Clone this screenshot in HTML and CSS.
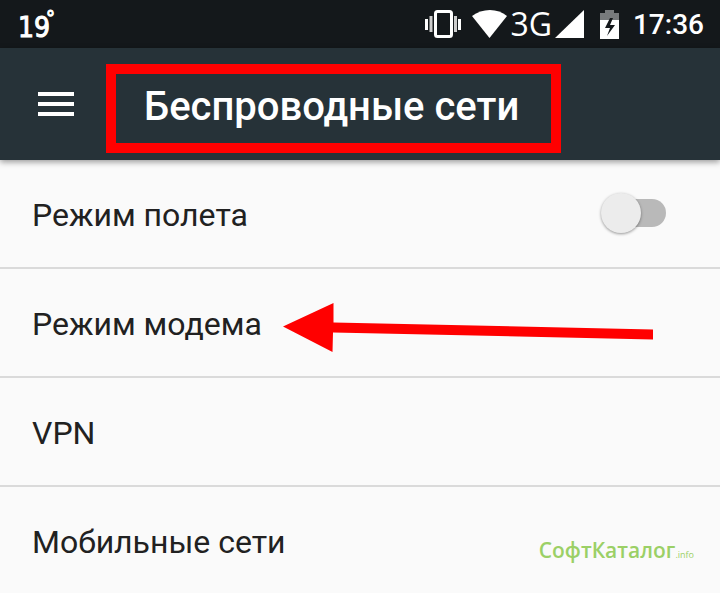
FILE: index.html
```
<!DOCTYPE html>
<html lang="ru">
    <head>
        <meta charset="utf-8">
        <meta name="viewport" content="width=device-width, initial-scale=1">
        <title>Беспроводные сети</title>
        <link rel="stylesheet" href="styles.css">
    </head>
    <body>
        <div class="statusbar">
            <span class="temperature">19<sup>°</sup></span>

            <div class="status-icons">
                <svg class="icon-vibrate" width="36" height="28" viewBox="0 0 36 28">
                    <rect x="10.500" y="1.500" width="16" height="25" rx="2" fill="none" stroke="#fff" stroke-width="3"/>
                    <path d="M0 9h3v11H0zM33 9h3v11h-3z" fill="#fff"/>
                    <path d="M4.500 6h3v16h-3zM29 6h3v16h-3z" fill="#ccc"/>
                </svg>
                <svg class="icon-wifi" width="36" height="28" viewBox="0 0 36 28">
                    <path d="M0 6C10-2 26-2 35 6L17.500 28z" fill="#fff"/>
                </svg>
                <span class="network">3G</span>
                <svg class="icon-signal" width="29" height="28" viewBox="0 0 29 28">
                    <path d="M0 28L29 0v28z" fill="#fff"/>
                </svg>
                <svg class="icon-battery" width="19" height="29" viewBox="0 0 19 29">
                    <path d="M0 3h5V0h9v3h5v7H0z" fill="#777a7c"/>
                    <path d="M0 10h19v19H0z" fill="#fff"/>
                    <path d="M10 8L5 18h5L7 26l8-11h-5l3-7z" fill="#14181b"/>
                </svg>
                <span class="clock">17:36</span>
            </div>
        </div>

        <header class="toolbar">
            <button class="menu-button" type="button" aria-label="Меню">
                <svg width="36" height="24" viewBox="0 0 36 24">
                    <path d="M0 0h36v4H0zM0 10h36v4H0zM0 20h36v4H0z" fill="#fff"/>
                </svg>
            </button>
            <h1>Беспроводные сети</h1>
        </header>

        <main class="settings">
            <div class="row">
                <label for="airplaneMode">Режим полета</label>
                <input id="airplaneMode" class="switch" type="checkbox">
            </div>
            <div class="row">
                <a href="#tethering">Режим модема</a>
                <svg class="arrow" width="370" height="50" viewBox="0 0 370 50">
                    <path d="M0 23.500L50.500 0V19.500L370 26.500V36.500L50 29.500L49.500 49z" fill="#f00"/>
                </svg>
            </div>
            <div class="row">
                <a href="#vpn">VPN</a>
            </div>
            <div class="row">
                <a href="#mobile">Мобильные сети</a>
                <div class="watermark">СофтКаталог<small>.info</small></div>
            </div>
        </main>
    </body>
</html>
```

FILE: styles.css
```
* {
    box-sizing: border-box;
}

body {
    margin: 0;
    background-color: #fafafa;
    color: #212121;
    font-family: Roboto, sans-serif;
}

svg {
    display: block;
    flex-shrink: 0;
}

.statusbar {
    display: flex;
    justify-content: space-between;
    align-items: center;
    height: 48px;
    padding: 0 16px 0 18px;
    background-color: #14181b;
    color: white;
}

.temperature {
    display: flex;
    align-items: center;
    font-family: "DejaVu Sans Condensed", "DejaVu Sans", sans-serif;
    font-size: 28px;
    line-height: 40px;
    padding-top: 8px;
    -webkit-text-stroke: 1px white;
}

.temperature sup {
    align-self: flex-start;
    font-size: 20px;
    line-height: 20px;
    margin-left: -4px;
}

.status-icons {
    display: flex;
    align-items: center;
}

.icon-wifi {
    margin-left: 11px;
}

.network {
    margin: 0 3px 0 2px;
    font-family: "Open Sans", sans-serif;
    font-size: 32px;
    line-height: 48px;
}

.icon-battery {
    margin: 0 14px 0 16px;
}

.clock {
    font-size: 28px;
    font-weight: 500;
    line-height: 48px;
    padding-top: 2px;
}

.toolbar {
    display: flex;
    align-items: flex-start;
    padding: 16px 32px 7px 38px;
    background-color: #263238;
    box-shadow: 0 2px 6px rgba(0, 0, 0, 0.4);
}

.menu-button {
    margin: 28px 32px 0 0;
    padding: 0;
    border: none;
    background: none;
    cursor: pointer;
}

h1 {
    margin: 0;
    padding: 9px 32px 12px 28px;
    border: 10px solid #f00;
    color: white;
    font-size: 40px;
    font-weight: 500;
    line-height: 48px;
    white-space: nowrap;
}

.row {
    display: flex;
    align-items: center;
    height: 109px;
    padding: 0 54px 0 32px;
    border-bottom: 2px solid #dadada;
    font-size: 32px;
    line-height: 40px;
}

.row:last-child {
    height: 107px;
    border-bottom: none;
}

.row label,
.row a {
    padding-top: 2px;
    color: inherit;
    text-decoration: none;
}

.switch {
    appearance: none;
    position: relative;
    width: 65px;
    height: 40px;
    margin: 0 0 2px auto;
    cursor: pointer;
}

.switch::before {
    content: "";
    position: absolute;
    top: 6px;
    left: 8px;
    right: 0;
    height: 28px;
    border-radius: 14px;
    background-color: #b9b9b9;
}

.switch::after {
    content: "";
    position: absolute;
    top: 0;
    left: 0;
    width: 40px;
    height: 40px;
    border-radius: 50%;
    background-color: #ececec;
    box-shadow: 0 1px 3px rgba(0, 0, 0, 0.4);
}

.switch:checked::after {
    left: 25px;
}

.arrow {
    margin: 10px 0 0 21px;
}

.watermark {
    margin: 24px -28px 0 auto;
    color: #9bd066;
    font-family: "Open Sans", sans-serif;
    font-size: 21px;
    font-weight: 600;
    line-height: 28px;
}

.watermark small {
    font-size: 9px;
    font-weight: 400;
}
```
